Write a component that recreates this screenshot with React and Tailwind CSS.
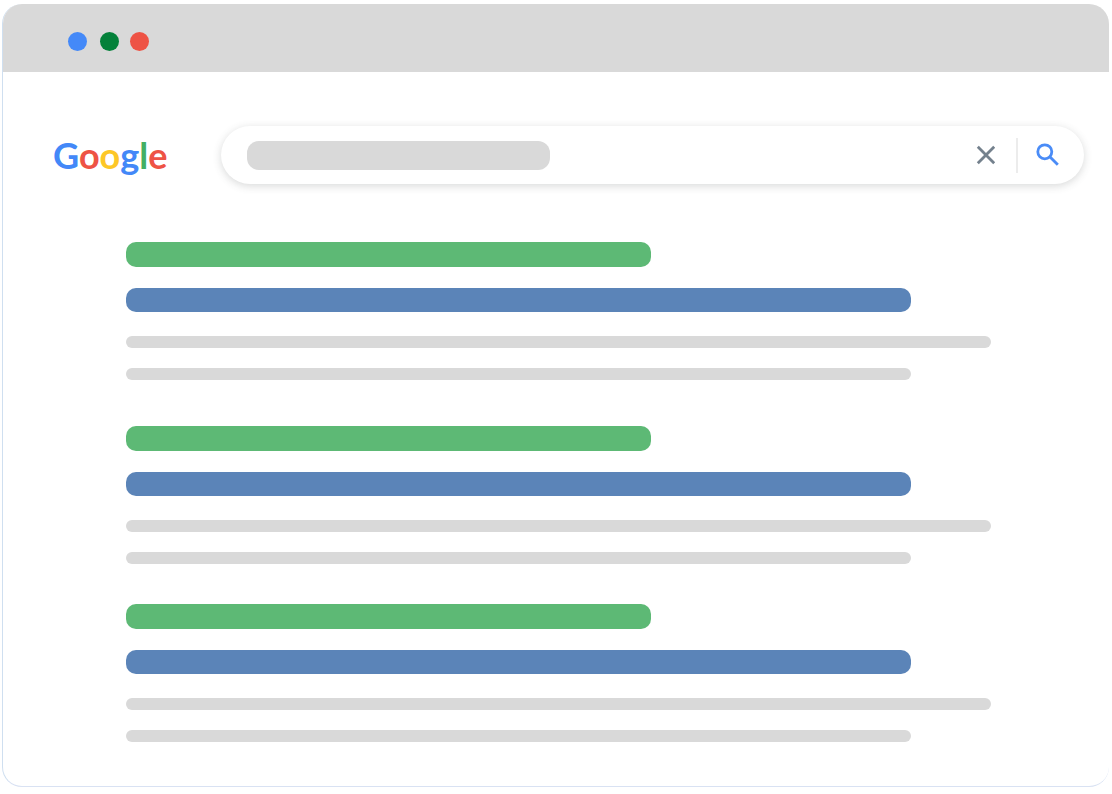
import React, { useState } from 'react';

const logoLetters = [
  { letter: 'G', color: 'text-[#4388f8]' },
  { letter: 'o', color: 'text-[#ee5345]' },
  { letter: 'o', color: 'text-[#fdc727]' },
  { letter: 'g', color: 'text-[#4388f8]' },
  { letter: 'l', color: 'text-[#42b064]' },
  { letter: 'e', color: 'text-[#ee5345]' },
];

const Logo = () => (
  <a
    href="#"
    aria-label="Google"
    className="w-[168px] shrink-0 font-['Lato',sans-serif] text-4xl leading-[58px] font-bold"
  >
    {logoLetters.map((item, index) => (
      <span key={index} className={item.color}>{item.letter}</span>
    ))}
  </a>
);

const SearchBar = () => {
  const [query, setQuery] = useState('');

  return (
    <form
      onSubmit={(e) => e.preventDefault()}
      className="flex h-[58px] flex-1 items-center rounded-full bg-white pl-[26px] pr-5 shadow-[0_2px_8px_rgba(60,64,67,0.2)]"
    >
      <input
        type="text"
        aria-label="Search"
        value={query}
        onChange={(e) => setQuery(e.target.value)}
        className="h-[29px] w-[303px] min-w-0 rounded-xl bg-[#d9d9d9] px-3 text-sm outline-none"
      />
      <div className="ml-auto flex items-center">
        <button type="button" aria-label="Clear" onClick={() => setQuery('')} className="p-1">
          <svg className="h-5 w-5" viewBox="0 0 20 20" fill="none" stroke="#74818d" strokeWidth="2.8">
            <path d="M1.8 1.8 18.2 18.2M18.2 1.8 1.8 18.2" />
          </svg>
        </button>
        <span className="ml-4 mr-[14px] h-[35px] w-[2px] bg-[#ececec]" />
        <button type="submit" aria-label="Submit search" className="p-1">
          <svg className="h-6 w-6" viewBox="0 0 24 24" fill="none" stroke="#4a8cf7" strokeWidth="2.8">
            <circle cx="8.8" cy="8.8" r="7" />
            <path d="m13.8 13.8 8 8" />
          </svg>
        </button>
      </div>
    </form>
  );
};

const ResultSkeleton = () => (
  <li>
    <div className="h-[25px] w-[60.7%] rounded-[10px] bg-[#5db975]" />
    <div className="mt-[21px] h-6 w-[90.7%] rounded-[10px] bg-[#5b84b8]" />
    <div className="mt-6 h-3 w-full rounded-md bg-[#d9d9d9]" />
    <div className="mt-5 h-3 w-[90.7%] rounded-md bg-[#d9d9d9]" />
  </li>
);

const App = () => (
  <div className="min-h-screen bg-white pl-[2px] pr-[3px] pt-1">
    <div className="overflow-hidden rounded-[20px] border-b border-l border-b-[#d9e2f3] border-l-[#cfdff0] bg-white">
      {/* Window bar */}
      <header className="flex h-[68px] items-center bg-[#d9d9d9] pl-[65px] pt-[6px]">
        <span className="h-[19px] w-[19px] rounded-full bg-[#4489f8]" />
        <span className="ml-[13px] h-[19px] w-[19px] rounded-full bg-[#04813a]" />
        <span className="ml-[11px] h-[19px] w-[19px] rounded-full bg-[#ee5345]" />
      </header>

      <div className="flex items-center pl-[50px] pr-[25px] pt-[54px]">
        <Logo />
        <SearchBar />
      </div>

      {/* Results */}
      <div className="pb-11 pl-[123px] pr-[118px] pt-[58px]">
        <ul className="flex flex-col gap-[46px]">
          <ResultSkeleton />
          <ResultSkeleton />
        </ul>
        <ul className="mt-10">
          <ResultSkeleton />
        </ul>
      </div>
    </div>
  </div>
);

export default App;
